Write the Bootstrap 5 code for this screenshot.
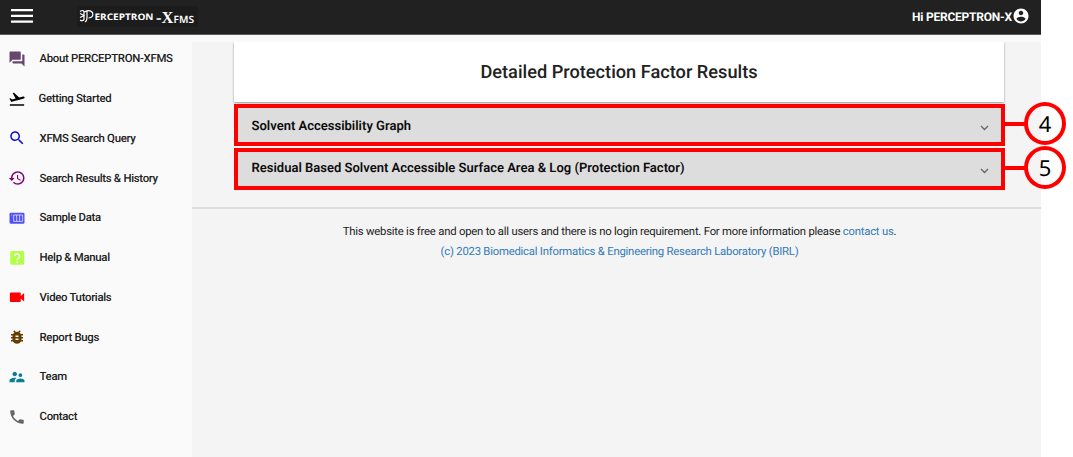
<!DOCTYPE html>
<html lang="en">
<head>
<meta charset="utf-8">
<meta name="viewport" content="width=device-width, initial-scale=1">
<title>Perceptron-XFMS</title>
<link href="https://cdn.jsdelivr.net/npm/bootstrap@5.3.0/dist/css/bootstrap.min.css" rel="stylesheet">
<style>
body{font-family:Roboto,"Liberation Sans",sans-serif;background:#fff;overflow:hidden;text-rendering:geometricPrecision}
.app{width:1041px;height:457px;background:#fafafa}
.topbar{height:35px;background:#212121;border-bottom:1px solid #5a5a5a;padding:0 11px}
.burger{margin-top:-3px}
.brand{margin-left:44px;width:121px;height:21px;margin-top:-1px;background:#1c1c1c;color:#fff}
.user{font-size:12px;font-weight:700;color:#fff;margin-top:-2px;letter-spacing:-.22px}
.user span{padding-top:2px}
.side{width:192px;padding-top:4px}
.side a{height:39.75px;padding-left:8px;color:#212121;font-size:11.4px;letter-spacing:-.31px;font-weight:500;text-decoration:none}
.side svg{width:18px;height:18px;margin-right:13.5px;flex:none}
.side .tight{margin-right:12.5px}
.content{background:#f4f4f4;margin-top:7px;padding:0 36px 0 42px}
.title{height:60px;background:#fff;box-shadow:0 1px 2px rgba(0,0,0,.4);margin-right:1px;clip-path:inset(0 -3px -3px -3px)}
.title h1{font-size:18.2px;font-weight:500;color:#212121;margin:0;padding-top:1px}
.panel{height:42px;border:4px solid #f00;background:#ddd;padding:0 12px 0 13.5px;margin-bottom:2px;color:#0c0c0c;font-size:13.02px;font-weight:600}
.panel svg{margin-top:5px}
.panel-first{margin-top:2px}
.panel-first span{margin-top:4px}
.panel-last svg{margin-top:3px}
.rule{height:1.5px;background:#dcdcdc;margin:17px -36px .5px -42px}
.foot{font-size:11.3px;letter-spacing:-.215px;line-height:20px;color:#212121;margin-top:13px}
.foot a{color:#337ab7;text-decoration:none}
.callout{position:absolute;left:1005px}
.callout-first{top:102px}
.callout-last{top:146px}
.lead-line{width:20px;height:4px;background:#f00}
.bubble{width:42px;height:43px;border:4px solid #f00;border-radius:50%;color:#000;font:22px/1 "Noto Sans",sans-serif;margin-left:-1px}
</style>
<script src="https://cdn.jsdelivr.net/npm/bootstrap@5.3.0/dist/js/bootstrap.bundle.min.js"></script>
</head>
<body>
<div class="app d-flex flex-column">
  <header class="topbar d-flex align-items-center">
    <svg class="burger" width="22" height="14" viewBox="0 0 22 14" fill="#fff"><path d="M0 0h22v2.200H0zM0 5.800h22V8H0zM0 11.600h22v2.200H0z"/></svg>
    <div class="brand"><svg class="d-block" width="121" height="21" fill="#fff">
      <g fill="none" stroke="#fff"><path d="M3 5.500q3-2 4 0v8q-1 2-4 .6M3 7.500l4 2-4 2M8 16q2-1 2-4V5M7.500 6q5-3 8 .5 1.500 5-4 5.500" stroke-width="1.200"/></g>
      <text x="17.500" y="14" font-family="Open Sans" font-weight="700" font-size="9" textLength="59" lengthAdjust="spacingAndGlyphs">ERCEPTRON</text>
      <text x="79" y="16.500" font-family="Liberation Serif" font-weight="700" font-size="17" textLength="17.500" lengthAdjust="spacingAndGlyphs">-X</text>
      <text x="96.500" y="16.500" font-family="Noto Sans" font-weight="600" font-size="10" textLength="20.500" lengthAdjust="spacingAndGlyphs">FMS</text>
    </svg></div>
    <div class="user ms-auto d-flex align-items-center"><span>Hi PERCEPTRON-X</span>
      <svg width="18" height="18" viewBox="0 0 24 24" fill="#fff"><path d="M12 2C6.480 2 2 6.480 2 12s4.480 10 10 10 10-4.480 10-10S17.520 2 12 2zm0 3c1.660 0 3 1.340 3 3s-1.340 3-3 3-3-1.340-3-3 1.340-3 3-3zm0 14.200c-2.500 0-4.710-1.280-6-3.220.03-1.990 4-3.080 6-3.080 1.990 0 5.970 1.090 6 3.080-1.290 1.940-3.500 3.220-6 3.220z"/></svg></div>
  </header>
  <div class="d-flex flex-grow-1">
    <nav class="side flex-shrink-0">
      <a href="#" class="d-flex align-items-center"><svg viewBox="0 0 24 24" fill="#68466f"><path d="M21 6h-2v9H6v2c0 .55.45 1 1 1h11l4 4V7c0-.55-.45-1-1-1zm-4 6V3c0-.55-.45-1-1-1H3c-.55 0-1 .45-1 1v14l4-4h10c.55 0 1-.45 1-1z"/></svg>About PERCEPTRON-XFMS</a>
      <a href="#" class="d-flex align-items-center"><svg viewBox="0 0 24 24" fill="#000" class="tight"><path d="M2.500 19h19v2h-19zm19.570-9.360c-.21-.8-1.040-1.280-1.840-1.060L14.920 10l-6.900-6.430-1.930.51 4.140 7.170-4.970 1.330-1.970-1.540-1.450.39 1.820 3.160.77 1.330 1.600-.43 5.310-1.420 4.350-1.160L21 11.490c.81-.23 1.280-1.050 1.070-1.850z"/></svg>Getting Started</a>
      <a href="#" class="d-flex align-items-center"><svg viewBox="0 0 24 24" fill="#1010d0"><path d="M15.500 14h-.79l-.28-.27C15.410 12.590 16 11.110 16 9.500 16 5.910 13.090 3 9.500 3S3 5.910 3 9.500 5.910 16 9.500 16c1.610 0 3.090-.59 4.230-1.570l.27.28v.79l5 4.990L20.490 19l-4.990-5zm-6 0C7.010 14 5 11.990 5 9.500S7.010 5 9.500 5 14 7.010 14 9.500 11.990 14 9.500 14z"/></svg>XFMS Search Query</a>
      <a href="#" class="d-flex align-items-center"><svg viewBox="0 0 24 24" fill="#800080"><path d="M13 3c-4.970 0-9 4.030-9 9H1l3.890 3.890.07.14L9 12H6c0-3.870 3.130-7 7-7s7 3.130 7 7-3.130 7-7 7c-1.930 0-3.680-.79-4.940-2.060l-1.420 1.420C8.270 19.990 10.510 21 13 21c4.970 0 9-4.030 9-9s-4.030-9-9-9zm-1 5v5l4.280 2.540.72-1.210-3.500-2.080V8H12z"/></svg>Search Results &amp; History</a>
      <a href="#" class="d-flex align-items-center"><svg viewBox="0 0 24 24"><rect x="2" y="5" width="20" height="14.500" rx="1.500" fill="#5050f5"/><path d="M7.500 8h12v8.500h-12zM11.500 8v8.500M15.500 8v8.500M4.500 8h1.200" fill="none" stroke="#d0d0ff" stroke-width="1.200"/></svg>Sample Data</a>
      <a href="#" class="d-flex align-items-center"><svg viewBox="0 0 24 24"><rect x="3" y="2.500" width="18.500" height="18.500" rx="2" fill="#b2ff45"/><path d="M9 9.500a3.200 3.200 0 1 1 5.200 2.600c-1.400 1.100-2 1.500-2 3.200M12.200 16.600v2" fill="none" stroke="#fff" stroke-width="2"/></svg>Help &amp; Manual</a>
      <a href="#" class="d-flex align-items-center"><svg viewBox="0 0 24 24" fill="#f00"><path d="M17 10.500V7c0-.55-.45-1-1-1H4c-1 0-1.500.45-1.500 1v10.500c0 .55.45 1 1 1H16c.55 0 1-.45 1-1V14l4.500 4V6.500z"/></svg>Video Tutorials</a>
      <a href="#" class="d-flex align-items-center"><svg viewBox="0 0 24 24" fill="#663d00"><path d="M20 8h-2.810c-.45-.78-1.070-1.450-1.820-1.960L17 4.410 15.590 3l-2.170 2.170C12.960 5.060 12.490 5 12 5s-.96.06-1.410.17L8.410 3 7 4.410l1.620 1.630C7.880 6.550 7.260 7.220 6.810 8H4v2h2.090c-.05.33-.09.66-.09 1v1H4v2h2v1c0 .34.04.67.09 1H4v2h2.810c1.040 1.790 2.970 3 5.190 3s4.150-1.210 5.190-3H20v-2h-2.090c.05-.33.09-.66.09-1v-1h2v-2h-2v-1c0-.34-.04-.67-.09-1H20V8zm-6 8h-4v-2h4v2zm0-4h-4v-2h4v2z"/></svg>Report Bugs</a>
      <a href="#" class="d-flex align-items-center"><svg viewBox="0 0 24 24" fill="#0b7f8f"><path d="M16.500 12c1.380 0 2.490-1.120 2.490-2.500S17.880 7 16.500 7 14 8.120 14 9.500s1.120 2.500 2.500 2.500zM9 11c1.660 0 2.990-1.340 2.990-3S10.660 5 9 5 6 6.340 6 8s1.340 3 3 3zm7.500 3c-1.830 0-5.500.92-5.500 2.750V19h11v-2.250c0-1.830-3.670-2.750-5.500-2.750zM9 13c-2.330 0-7 1.170-7 3.500V19h7v-2.250c0-.85.330-2.340 2.370-3.470C10.500 13.100 9.660 13 9 13z"/></svg>Team</a>
      <a href="#" class="d-flex align-items-center"><svg viewBox="0 0 24 24" fill="#666"><path d="M6.620 10.790c1.440 2.830 3.760 5.140 6.590 6.590l2.200-2.200c.27-.27.67-.36 1.020-.24 1.120.37 2.330.57 3.570.57.55 0 1 .45 1 1V20c0 .55-.45 1-1 1-9.390 0-17-7.610-17-17 0-.55.45-1 1-1h3.500c.55 0 1 .45 1 1 0 1.250.2 2.450.57 3.570.11.35.03.74-.25 1.020l-2.200 2.200z"/></svg>Contact</a>
    </nav>
    <main class="content flex-grow-1">
      <div class="title d-flex align-items-center justify-content-center"><h1>Detailed Protection Factor Results</h1></div>
      <div class="panel panel-first d-flex align-items-center justify-content-between"><span>Solvent Accessibility Graph</span><svg width="9" height="6" fill="none" stroke="#666" stroke-width="1.400"><path d="M1 1l3.500 3.500L8 1"/></svg></div>
      <div class="panel panel-last d-flex align-items-center justify-content-between"><span>Residual Based Solvent Accessible Surface Area &amp; Log (Protection Factor)</span><svg width="9" height="6" fill="none" stroke="#666" stroke-width="1.400"><path d="M1 1l3.500 3.500L8 1"/></svg></div>
      <div class="rule"></div>
      <footer class="foot text-center"><div>This website is free and open to all users and there is no login requirement. For more information please <a href="#">contact us</a>.</div>
      <div><a href="#">(c) 2023 Biomedical Informatics &amp; Engineering Research Laboratory (BIRL)</a></div></footer>
    </main>
  </div>
</div>
<div class="callout callout-first d-flex align-items-center"><div class="lead-line"></div><div class="bubble d-flex align-items-center justify-content-center">4</div></div>
<div class="callout callout-last d-flex align-items-center"><div class="lead-line"></div><div class="bubble d-flex align-items-center justify-content-center">5</div></div>
</body>
</html>
